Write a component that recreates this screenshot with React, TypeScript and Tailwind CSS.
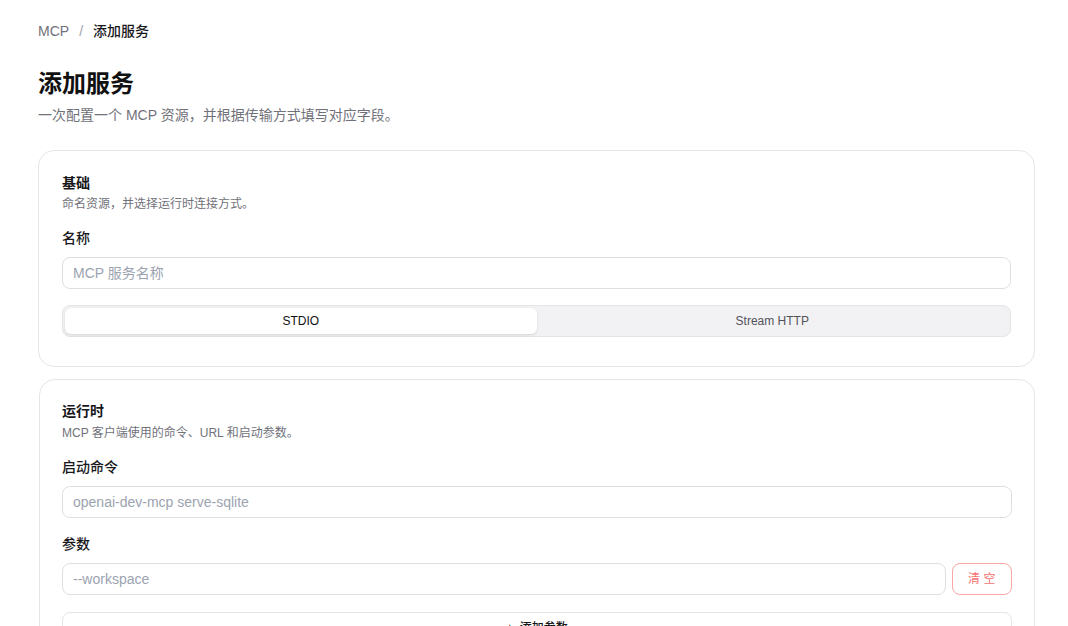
import React from "react";

const font = { fontFamily: '"Liberation Sans", "Noto Sans CJK SC", sans-serif' };

function Label({ children }: { children: React.ReactNode }) {
  return <div className="text-[14px] leading-5 font-medium text-[#18181b]">{children}</div>;
}

function Input({ placeholder }: { placeholder: string }) {
  return (
    <div className="flex-1 h-8 rounded-lg border border-[#dfdfe2] bg-white px-[10px] flex items-center text-[14px] text-[#9ca3af]">
      {placeholder}
    </div>
  );
}

export default function App() {
  return (
    <div className="min-h-[626px] bg-white pl-[38px] pr-[33px] pt-[21px]" style={font}>
      <div className="flex items-center text-[14px] leading-5">
        <span className="text-[#71717a]">MCP</span>
        <span className="text-[#a1a1aa] mx-[10px]">/</span>
        <span className="text-[#18181b] font-medium">添加服务</span>
      </div>

      <h1 className="mt-[27px] text-[24px] leading-8 font-semibold text-[#111111]">添加服务</h1>
      <p className="mt-[5px] text-[14px] leading-5 text-[#71717a]">一次配置一个 MCP 资源，并根据传输方式填写对应字段。</p>

      <div className="mt-[25px] rounded-2xl border border-[#e6e6e8] px-[23px] pt-[22px] pb-[29px]">
        <div className="text-[14px] leading-5 font-semibold text-[#18181b]">基础</div>
        <div className="mt-[3px] text-[12px] leading-4 text-[#71717a]">命名资源，并选择运行时连接方式。</div>
        <div className="mt-4">
          <Label>名称</Label>
        </div>
        <div className="mt-[9px] flex">
          <Input placeholder="MCP 服务名称" />
        </div>
        <div className="mt-4 h-8 rounded-lg border border-[#e4e4e7] bg-[#f2f2f4] p-[2px] flex">
          <div className="flex-1 rounded-md bg-white shadow-sm flex items-center justify-center text-[12px] font-medium text-[#111111]">STDIO</div>
          <div className="flex-1 flex items-center justify-center text-[12px] text-[#52525b]">Stream HTTP</div>
        </div>
      </div>

      <div className="mt-3 ml-[1px] rounded-2xl border border-[#e6e6e8] px-[22px] pt-[21px] pb-6">
        <div className="text-[14px] leading-5 font-semibold text-[#18181b]">运行时</div>
        <div className="mt-1 text-[12px] leading-4 text-[#71717a]">MCP 客户端使用的命令、URL 和启动参数。</div>
        <div className="mt-4">
          <Label>启动命令</Label>
        </div>
        <div className="mt-[9px] flex">
          <Input placeholder="openai-dev-mcp serve-sqlite" />
        </div>
        <div className="mt-4">
          <Label>参数</Label>
        </div>
        <div className="mt-[9px] flex gap-[6px]">
          <Input placeholder="--workspace" />
          <button className="w-[60px] h-8 rounded-lg border border-[#fca5a5] text-[12px] tracking-[0.3em] text-[#f87171] flex items-center justify-center pl-[3px]">清空</button>
        </div>
        <div className="mt-[17px] h-8 rounded-lg border border-[#e4e4e7] flex items-center justify-center text-[12px] font-medium text-[#18181b]">
          +&nbsp;&nbsp;添加参数
        </div>
      </div>
    </div>
  );
}
